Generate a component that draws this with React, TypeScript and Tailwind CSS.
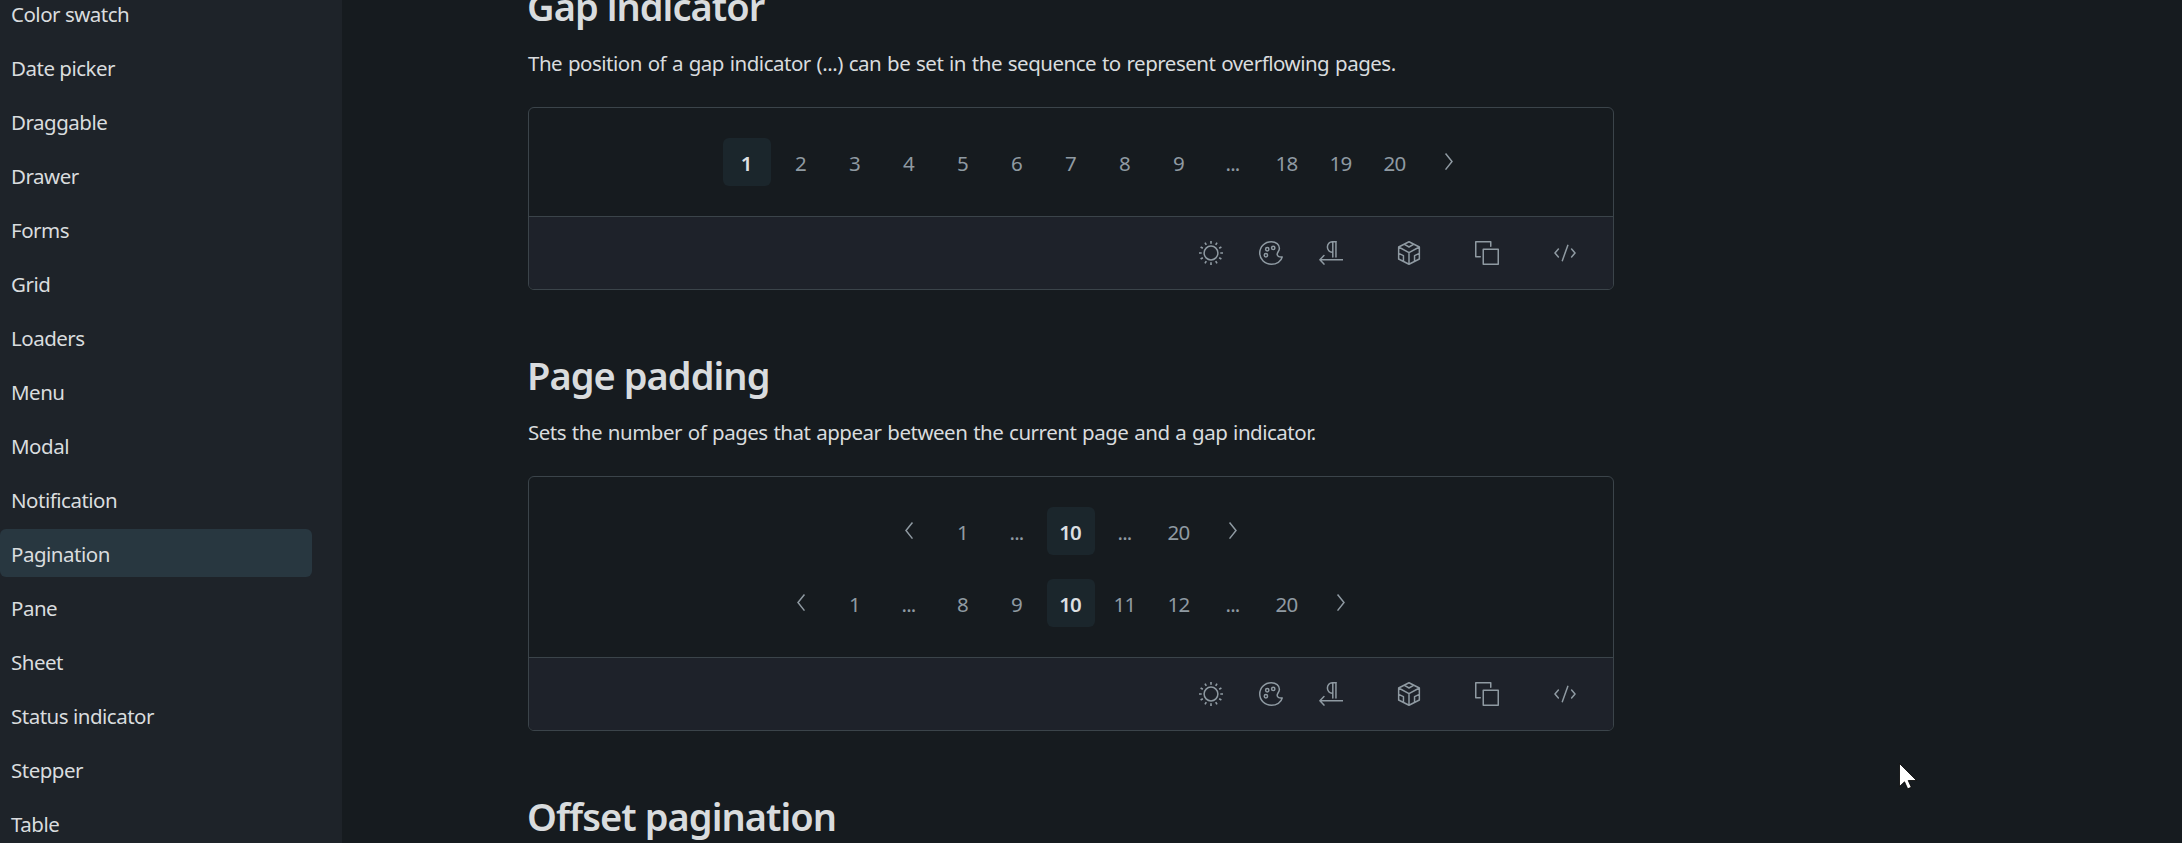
import type { ReactNode } from "react";

const NAV = [
  "Color swatch",
  "Date picker",
  "Draggable",
  "Drawer",
  "Forms",
  "Grid",
  "Loaders",
  "Menu",
  "Modal",
  "Notification",
  "Pagination",
  "Pane",
  "Sheet",
  "Status indicator",
  "Stepper",
  "Table",
];

function Icon({ children }: { children: ReactNode }) {
  return (
    <svg viewBox="0 0 16 16" className="size-6" fill="none" stroke="currentColor" strokeWidth="1" strokeLinecap="round" strokeLinejoin="round">
      {children}
    </svg>
  );
}

const Sun = () => (
  <Icon>
    <circle cx="8" cy="8" r="4.6" />
    <path
      strokeLinecap="butt"
      strokeWidth="1.1"
      d="M8 0v1.8M8 14.2V16M0 8h1.8M14.2 8H16M4 1.07l.85 1.5M11.15 13.43l.85 1.5M1.07 4l1.5.85M13.43 11.15l1.5.85M1.07 12l1.5-.85M13.43 4.85l1.5-.85M4 14.93l.85-1.5M11.15 2.57l.85-1.5"
    />
  </Icon>
);

const Palette = () => (
  <Icon>
    <path d="M15.5 10.6c-.6 3-3.9 4.900-7.200 4.900C3.900 15.500.5 12.200.5 8S3.900.5 8.200.5c3.200 0 5.400 1.800 5.400 4.300 0 2-1.500 2.600-1.500 4.100 0 1.600 1.700 1.900 3.400 1.700z" />
    <circle cx="5.500" cy="5.500" r="1.1" />
    <circle cx="9.500" cy="4.600" r="1.1" />
    <circle cx="4.600" cy="9.500" r="1.1" />
  </Icon>
);

const Direction = () => (
  <Icon>
    <path d="M11.500.5H8.800a3.200 3.500 0 0 0 0 7h.4M9.200.5v10.200M11.300.5v10.200M.7 12.500h15M3.300 9.700.6 12.500l2.700 2.900" />
  </Icon>
);

const Cube = () => (
  <Icon>
    <path d="M8 .5 14.900 4v8L8 15.500 1.100 12V4zM1.100 4 8 7.800 14.900 4M8 7.800v7.700M5 2.300 8 4l3-1.700M1.100 8.200l3.200 1.600v3.600M14.900 8.200l-3.200 1.600v3.600" />
  </Icon>
);

const Copy = () => (
  <Icon>
    <path d="M3.500 10.500h-3V.5h10v3M5.500 5.500h10v10h-10z" />
  </Icon>
);

const Code = () => (
  <Icon>
    <path d="M3.600 5.400 1.300 8l2.300 2.600M12.400 5.400 14.700 8l-2.300 2.600M9.900 2.900 6.200 13.100" />
  </Icon>
);

function Chevron({ left = false }: { left?: boolean }) {
  return (
    <Icon>
      <path strokeLinecap="butt" strokeLinejoin="miter" d={left ? "M10.300 2.300 6 7.700l4.300 5.400" : "M5.700 2.300 10 7.700 5.700 13.100"} />
    </Icon>
  );
}

function Pager({ items, current }: { items: string[]; current: string }) {
  return (
    <nav className="flex justify-center gap-1.5">
      {items.map((item, i) => {
        if (item === "hidden") return <span key={i} className="size-12" />;
        if (item === "prev" || item === "next")
          return (
            <button key={i} className="grid size-12 place-items-center">
              <Chevron left={item === "prev"} />
            </button>
          );
        return (
          <button
            key={i}
            className={
              item === current
                ? "size-12 rounded-md bg-[#1b262c] pr-0.5 pt-0.5 text-[20.5px] font-semibold tracking-[-0.05em] text-[#dcdfe1]"
                : "size-12 rounded-md pr-px pt-0.5 text-[20.5px] tracking-[-0.04em]"
            }
          >
            {item}
          </button>
        );
      })}
    </nav>
  );
}

function Example({ children }: { children: ReactNode }) {
  return (
    <div className="mt-7 w-[1086px] overflow-hidden rounded-md border border-[#3b444a] text-[#8f9aa2]">
      <div className="flex flex-col gap-6 py-[30px]">{children}</div>
      <div className="flex h-[73px] items-center justify-end border-t border-[#3b444a] bg-[#1e222a] pr-9">
        <div className="flex gap-9 pr-[54px]">
          <Sun />
          <Palette />
          <Direction />
        </div>
        <div className="flex gap-[54px]">
          <Cube />
          <Copy />
          <Code />
        </div>
      </div>
    </div>
  );
}

function Heading({ children }: { children: ReactNode }) {
  return (
    <h2 className="-ml-px h-12 whitespace-nowrap text-[38px] font-semibold leading-[47px] tracking-[-0.025em]">{children}</h2>
  );
}

function Lead({ children }: { children: ReactNode }) {
  return (
    <p className="mt-4 h-8 whitespace-nowrap text-[20.5px] leading-8 tracking-[-0.024em] [word-spacing:0.95px]">{children}</p>
  );
}

export default function App() {
  return (
    <div className="relative flex h-[843px] overflow-hidden bg-[#161b1f] font-['Noto_Sans','Open_Sans',sans-serif] text-[#d9dcde]">
      <aside className="w-[342px] shrink-0 bg-[#1e2329] pr-[30px]">
        <ul className="-mt-[11px] flex flex-col gap-1.5">
          {NAV.map((label) => (
            <li
              key={label}
              className={
                label === "Pagination"
                  ? "flex h-12 shrink-0 items-center rounded-md bg-[#283740] pl-[11px] pt-0.5"
                  : "flex h-12 shrink-0 items-center pl-[11px] pt-0.5"
              }
            >
              <span className="whitespace-nowrap text-[20.5px] tracking-[-0.024em]">{label}</span>
            </li>
          ))}
        </ul>
      </aside>

      <main className="pl-[186px]">
        <section className="-mt-[17px] h-[369px]">
          <Heading>Gap indicator</Heading>
          <Lead>The position of a gap indicator (...) can be set in the sequence to represent overflowing pages.</Lead>
          <Example>
            <Pager current="1" items={["hidden", "1", "2", "3", "4", "5", "6", "7", "8", "9", "...", "18", "19", "20", "next"]} />
          </Example>
        </section>
        <section className="h-[441px]">
          <Heading>Page padding</Heading>
          <Lead>Sets the number of pages that appear between the current page and a gap indicator.</Lead>
          <Example>
            <Pager current="10" items={["prev", "1", "...", "10", "...", "20", "next"]} />
            <Pager current="10" items={["prev", "1", "...", "8", "9", "10", "11", "12", "...", "20", "next"]} />
          </Example>
        </section>
        <section>
          <Heading>Offset pagination</Heading>
        </section>
      </main>

      <svg className="absolute left-[1898px] top-[762px]" width="20" height="28" viewBox="0 0 20 28">
        <path d="M1.500 1.500v23l5-4.700 3.200 7 3.600-1.500-3.100-6.800h8.300z" fill="#fff" stroke="#000" strokeWidth="0.800" />
      </svg>
    </div>
  );
}
